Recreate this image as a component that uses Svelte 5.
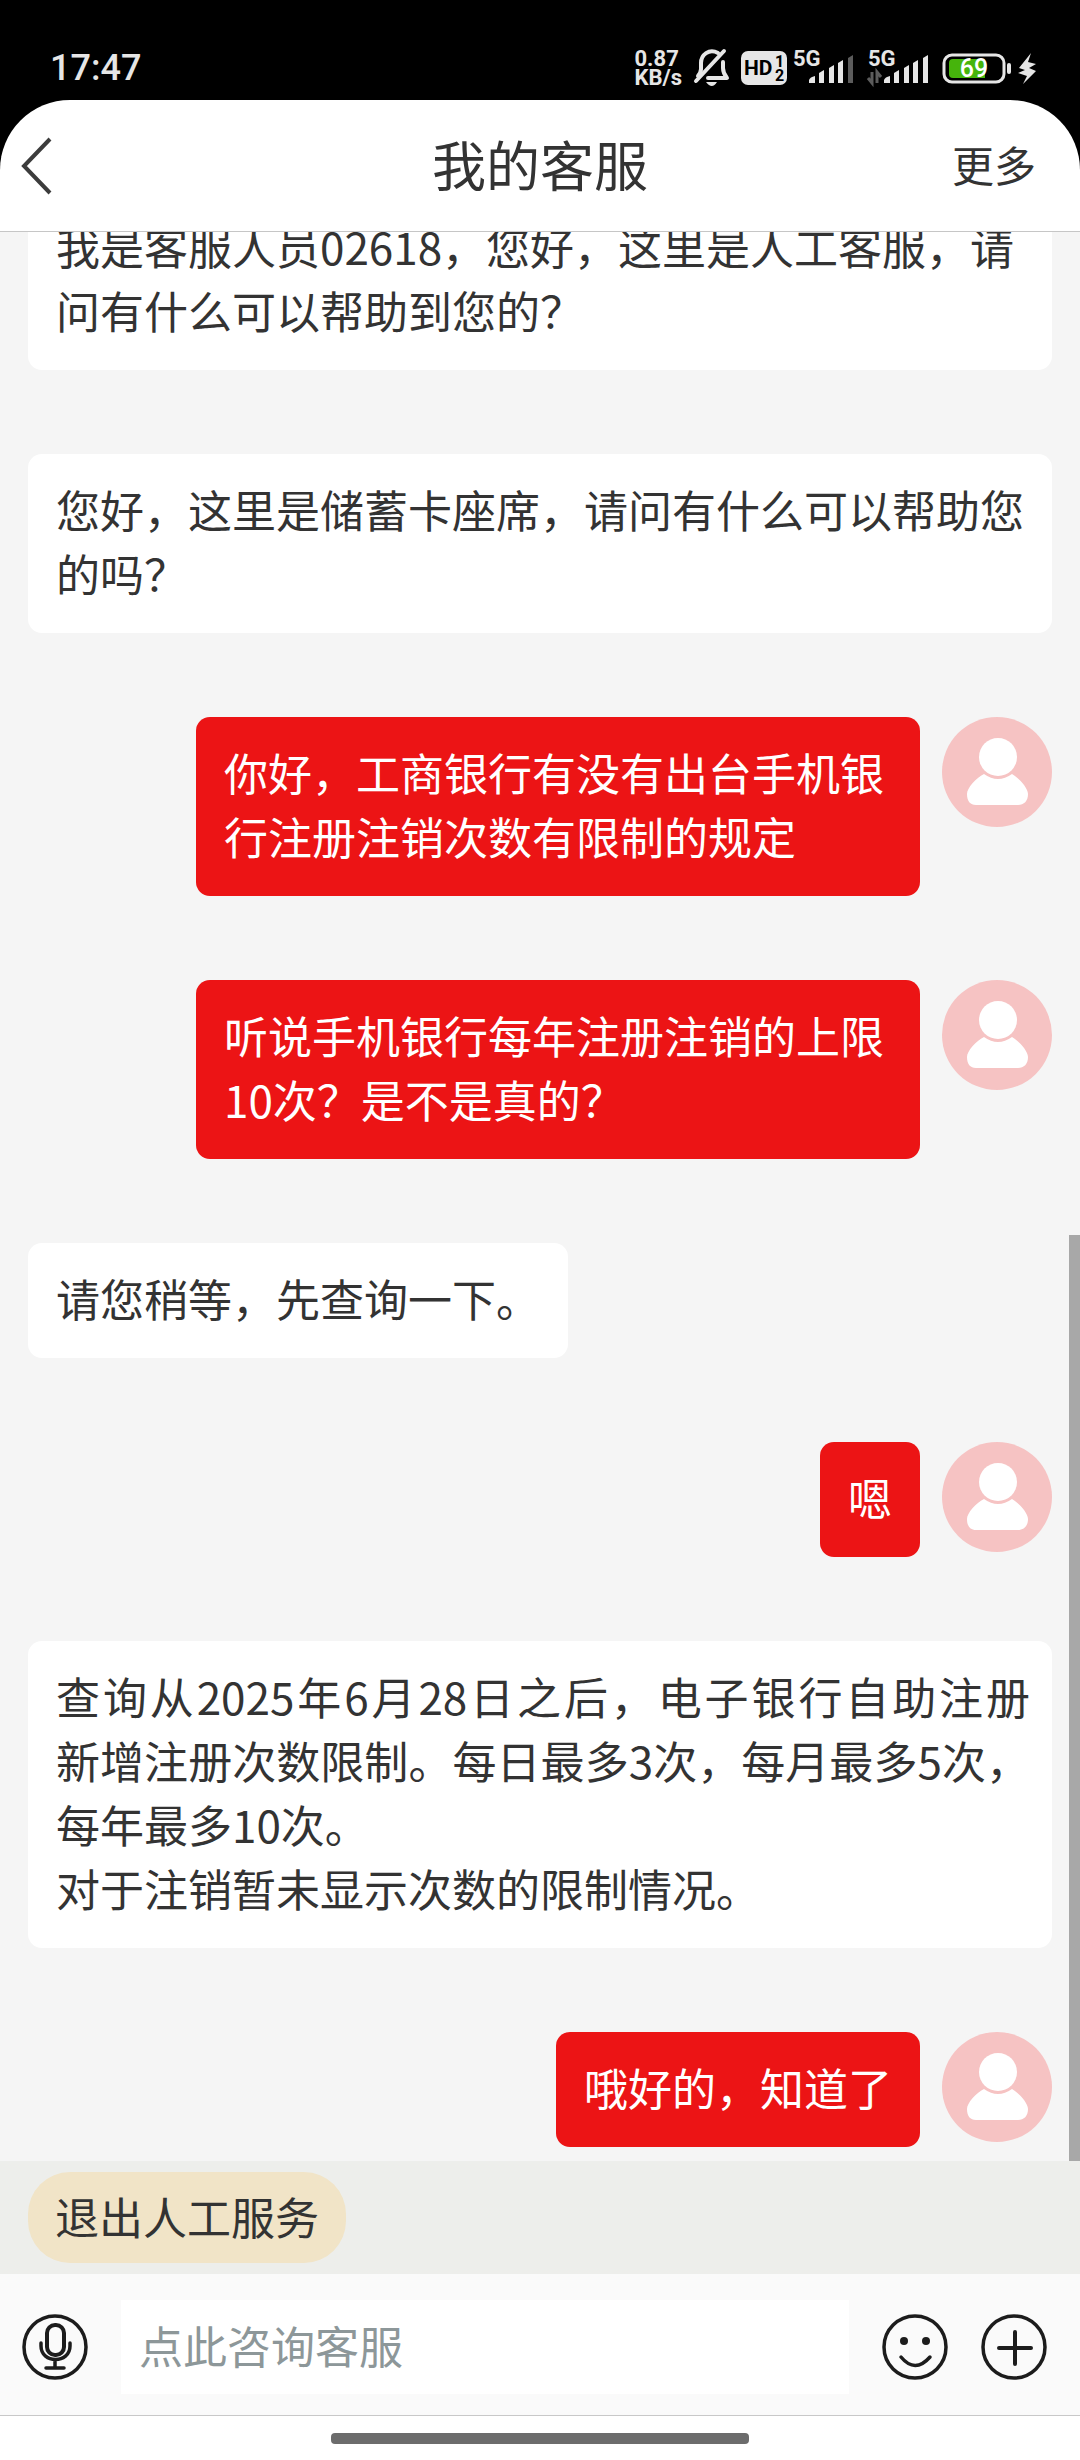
<script>
  // U+2060 keeps 新增 together when the line wraps
  const messages = [
    { from: "agent", text: "我是客服人员02618，您好，这里是人工客服，请问有什么可以帮助到您的？" },
    { from: "agent", text: "您好，这里是储蓄卡座席，请问有什么可以帮助您的吗？" },
    { from: "user", text: "你好，工商银行有没有出台手机银行注册注销次数有限制的规定" },
    { from: "user", text: "听说手机银行每年注册注销的上限10次？是不是真的？" },
    { from: "agent", text: "请您稍等，先查询一下。" },
    { from: "user", text: "嗯" },
    {
      from: "agent",
      justify: true,
      text: "查询从2025年6月28日之后，电子银行自助注册新\u2060增注册次数限制。每日最多3次，每月最多5次，每年最多10次。\n对于注销暂未显示次数的限制情况。",
    },
    { from: "user", text: "哦好的，知道了" },
  ];

  // the first line has 4 lit bars, the second one all 5
  const signals = [
    { lit: 4, data: false },
    { lit: 5, data: true },
  ];

  const bars = [
    "M16 35 v-3 q1 -3 6 -4 v7z",
    "M26 35 v-10 l5 -3 v13z",
    "M36 35 v-15 l5 -3 v18z",
    "M45 35 v-20 l5 -3 v23z",
    "M55 35 v-25 l5 -3 v28z",
  ];

  let draft = "";
</script>

<div class="phone" lang="zh-CN">
  <div class="status">
    <span class="time">17:47</span>
    <div class="status-icons">
      <div class="speed"><span>0.87</span><span>KB/s</span></div>

      <svg width="35" height="40" viewBox="0 0 35 40" fill="none" stroke="#e6e6e6" stroke-width="4" stroke-linecap="round">
        <path d="M24 5 C15 0 7 7 7 15 V21 Q7 24 4 28" />
        <path d="M30 3 L2 33" />
        <path d="M29 14 V20 Q29 25 33 30 H14" stroke-linejoin="round" />
        <path d="M12 34 H23 Q18 42 12 34z" fill="#e6e6e6" stroke="none" />
      </svg>

      <div class="pair hd-pair">
        <svg width="46" height="40" viewBox="0 0 46 40">
          <rect x="0" y="3" width="46" height="34" rx="7" fill="#e6e6e6" />
          <text class="hd" x="3" y="27">HD</text>
          <text class="hd-small" x="34" y="19">1</text>
          <text class="hd-small" x="34" y="33">2</text>
        </svg>
        <svg width="63" height="40" viewBox="0 0 63 40">
          <text class="net" x="0" y="18">5G</text>
          {#each bars as bar, i}
            <path d={bar} fill={i < signals[0].lit ? "#e6e6e6" : "#5c5c5c"} />
          {/each}
        </svg>
      </div>

      <svg width="62" height="40" viewBox="0 0 62 40">
        <text class="net" x="0" y="18">5G</text>
        {#each bars as bar, i}
          <path d={bar} fill={i < signals[1].lit ? "#e6e6e6" : "#5c5c5c"} />
        {/each}
        {#if signals[1].data}
          <path d="M4 24 V35 L0 30 M9 35 V24 L13 29" fill="none" stroke="#5c5c5c" stroke-width="3" />
        {/if}
      </svg>

      <div class="pair">
        <svg width="69" height="40" viewBox="0 0 69 40">
          <rect x="2" y="7" width="60" height="27" rx="8" fill="none" stroke="#e6e6e6" stroke-width="3" />
          <path d="M11 11 H43 V30 H11 Q7 30 7 26 V15 Q7 11 11 11z" fill="#46b40c" />
          <rect x="65" y="15" width="4" height="11" rx="2" fill="#e6e6e6" />
          <text class="level" x="32" y="29">69</text>
        </svg>
        <svg width="18" height="40" viewBox="0 0 18 40">
          <path d="M13 5 L1 20 L7 22 L0 25 L9 28 L5 36 L18 23 L11 20 L18 16 L10 14z" fill="#e6e6e6" />
        </svg>
      </div>
    </div>
  </div>

  <header>
    <button class="back" aria-label="返回">
      <svg width="30" height="56" viewBox="0 0 30 56" fill="none" stroke="#3c3c3c" stroke-width="4">
        <path d="M28 1 L2 28 L28 55" />
      </svg>
    </button>
    <h1>我的客服</h1>
    <button class="more">更多</button>
  </header>

  <main>
    {#each messages as message}
      <div class="row {message.from}">
        <p class="bubble" class:justify={message.justify}>{message.text}</p>
        {#if message.from === "user"}
          <svg width="110" height="110" viewBox="0 0 110 110">
            <circle cx="55" cy="55" r="55" fill="#f6c3c3" />
            <path
              d="M42 57 Q56 67 70 57 C77 61 86 71 86 77 C86 84 82 88 76 88 H34 C28 88 25 84 25 77 C25 71 34 61 42 57z"
              fill="#fff"
            />
            <circle cx="56" cy="40" r="19" fill="#fff" />
          </svg>
        {/if}
      </div>
    {/each}
    <div class="scrollbar"></div>
  </main>

  <div class="quick">
    <button>退出人工服务</button>
  </div>

  <form class="composer" on:submit|preventDefault>
    <button type="button" aria-label="语音">
      <svg width="66" height="66" viewBox="0 0 66 66" fill="none" stroke="#1c1c1c" stroke-width="4" stroke-linecap="round">
        <circle cx="33" cy="33" r="31" stroke-width="3.5" />
        <rect x="25" y="11" width="17" height="30" rx="8" />
        <path d="M19 29 V32 C19 50 48 50 48 32 V29 M33 46 V54 M24 54 H42" stroke-width="3.5" />
      </svg>
    </button>
    <input type="text" aria-label="点此咨询客服" placeholder="点此咨询客服" bind:value={draft} />
    <button type="button" aria-label="表情">
      <svg width="66" height="66" viewBox="0 0 66 66" fill="none" stroke="#1c1c1c" stroke-width="3.5" stroke-linecap="round">
        <circle cx="33" cy="33" r="31" />
        <circle cx="22" cy="27" r="4" fill="#1c1c1c" stroke="none" />
        <circle cx="44" cy="27" r="4" fill="#1c1c1c" stroke="none" />
        <path d="M19 43 Q33 60 48 43" />
      </svg>
    </button>
    <button type="button" aria-label="更多功能">
      <svg width="66" height="66" viewBox="0 0 66 66" fill="none" stroke="#1c1c1c" stroke-linecap="round">
        <circle cx="33" cy="33" r="31" stroke-width="3.5" />
        <path d="M18 34 H50 M34 18 V50" stroke-width="4" />
      </svg>
    </button>
  </form>

  <div class="gesture"><span></span></div>
</div>

<style>
  :global(body) {
    background: #000;
  }

  .phone {
    display: flex;
    flex-direction: column;
    height: 100vh;
    font-family: "Noto Sans CJK SC", sans-serif;
    font-size: 44px;
    line-height: 64px;
    color: #333;
  }

  svg {
    display: block;
    flex: none;
    overflow: visible;
  }

  button {
    padding: 0;
    border: 0;
    background: none;
    font: inherit;
    color: inherit;
    cursor: pointer;
  }

  .status {
    display: flex;
    align-items: center;
    justify-content: space-between;
    height: 64px;
    padding: 36px 44px 0 50px;
    color: #e6e6e6;
    font-family: Roboto, sans-serif;
  }

  .time {
    font-size: 36px;
    font-weight: 500;
  }

  .status-icons,
  .pair {
    display: flex;
    align-items: center;
    gap: 12px;
  }

  .pair {
    gap: 7px;
  }

  .hd-pair {
    gap: 6px;
  }

  .speed {
    display: flex;
    flex-direction: column;
    font-size: 22px;
    font-weight: 700;
    line-height: 19px;
  }

  text {
    font-weight: 700;
    fill: #e6e6e6;
  }

  .net {
    font-size: 22px;
  }

  .hd {
    font-size: 21px;
    fill: #000;
  }

  .hd-small {
    font-size: 16px;
    fill: #000;
  }

  .level {
    font-size: 25px;
    font-weight: 500;
    fill: #fff;
    text-anchor: middle;
  }

  header {
    display: grid;
    grid-template-columns: 1fr auto 1fr;
    align-items: center;
    height: 131px;
    padding: 0 22px;
    border-bottom: 1px solid #c6c6c6;
    border-radius: 70px 70px 0 0;
    background: #fff;
  }

  h1 {
    margin: 0;
    padding-bottom: 4px;
    font-size: 54px;
    font-weight: 400;
  }

  .back {
    justify-self: start;
  }

  .more {
    justify-self: end;
    padding: 0 22px 4px 0;
    font-size: 42px;
  }

  main {
    position: relative;
    display: flex;
    flex: 1;
    flex-direction: column;
    justify-content: flex-end;
    gap: 84px;
    min-height: 0;
    padding: 0 28px 14px;
    overflow: hidden;
    background: #f5f5f5;
  }

  .row {
    display: flex;
    flex: none;
    align-items: flex-start;
    gap: 22px;
  }

  .bubble {
    margin: 0;
    padding: 23px 28px 28px;
    border-radius: 14px;
    background: #fff;
    white-space: pre-line;
  }

  .justify {
    padding-right: 22px;
    text-align: justify;
  }

  .user {
    justify-content: flex-end;
    padding-left: 168px;
  }

  .user .bubble {
    background: #ec1415;
    color: #fff;
  }

  .scrollbar {
    position: absolute;
    right: 0;
    bottom: 0;
    width: 11px;
    height: 48%;
    background: #a8a8a8;
  }

  .quick {
    padding: 11px 28px;
    background: #edeeeb;
  }

  .quick button {
    display: block;
    height: 91px;
    padding: 0 27px 4px;
    border-radius: 42px;
    background: #f1e4c7;
  }

  .composer {
    display: flex;
    align-items: center;
    gap: 33px;
    padding: 26px 33px 21px 22px;
    border-bottom: 1px solid #c8c8c8;
    background: #fafafa;
  }

  input {
    flex: 1;
    min-width: 0;
    height: 94px;
    padding: 0 18px 4px;
    border: 0;
    box-sizing: border-box;
    background: #fff;
    font: inherit;
    color: #333;
  }

  input::placeholder {
    color: #8d9799;
    opacity: 1;
  }

  .gesture {
    display: flex;
    justify-content: center;
    height: 27px;
    padding-top: 17px;
    background: #fff;
  }

  .gesture span {
    width: 418px;
    height: 11px;
    border-radius: 4px;
    background: #6c6c6c;
  }
</style>
